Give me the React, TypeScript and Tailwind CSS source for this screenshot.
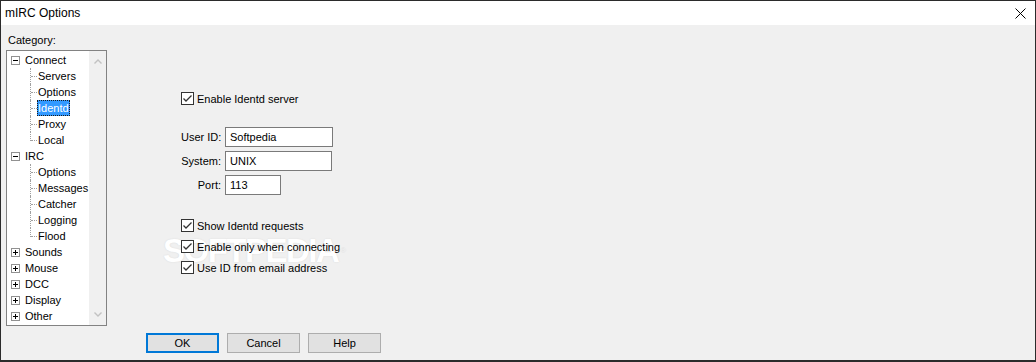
import React from "react";

const font = { fontFamily: '"Liberation Sans", Arial, sans-serif' };

type Node = { label: string; level: 0 | 1; expand?: "minus" | "plus"; selected?: boolean; last?: boolean };

const nodes: Node[] = [
  { label: "Connect", level: 0, expand: "minus" },
  { label: "Servers", level: 1 },
  { label: "Options", level: 1 },
  { label: "Identd", level: 1, selected: true },
  { label: "Proxy", level: 1 },
  { label: "Local", level: 1, last: true },
  { label: "IRC", level: 0, expand: "minus" },
  { label: "Options", level: 1 },
  { label: "Messages", level: 1 },
  { label: "Catcher", level: 1 },
  { label: "Logging", level: 1 },
  { label: "Flood", level: 1, last: true },
  { label: "Sounds", level: 0, expand: "plus" },
  { label: "Mouse", level: 0, expand: "plus" },
  { label: "DCC", level: 0, expand: "plus" },
  { label: "Display", level: 0, expand: "plus" },
  { label: "Other", level: 0, expand: "plus" },
];

function Expander({ kind }: { kind: "minus" | "plus" }) {
  return (
    <svg width="9" height="9" viewBox="0 0 9 9" className="shrink-0">
      <rect x="0.5" y="0.5" width="8" height="8" fill="white" stroke="#919191" />
      <line x1="2" y1="4.5" x2="7" y2="4.5" stroke="#000" />
      {kind === "plus" && <line x1="4.5" y1="2" x2="4.5" y2="7" stroke="#000" />}
    </svg>
  );
}

function TreeRow({ n }: { n: Node }) {
  if (n.level === 0) {
    return (
      <div className="h-[16px] flex items-center pl-[4px]">
        <Expander kind={n.expand!} />
        <span className="ml-[5px] leading-[16px]">{n.label}</span>
      </div>
    );
  }
  return (
    <div className="h-[16px] flex items-center pl-[23px] relative">
      <div
        className={`absolute left-[23px] top-0 w-0 border-l border-dotted border-[#a0a0a0] ${n.last ? "h-[9px]" : "h-[16px]"}`}
      />
      <div className="w-[6px] h-0 border-t border-dotted border-[#a0a0a0] ml-[1px]" />
      <span
        className={`h-[16px] leading-[16px] px-[1px] ${
          n.selected ? "bg-[#3399ff] text-white outline outline-1 outline-dotted outline-[#1a1a1a] -outline-offset-1" : ""
        }`}
      >
        {n.label}
      </span>
    </div>
  );
}

function Check({ label }: { label: string }) {
  return (
    <div className="flex items-center h-[13px]">
      <svg width="13" height="13" viewBox="0 0 13 13" className="shrink-0">
        <rect x="0.5" y="0.5" width="12" height="12" fill="white" stroke="#333" />
        <path d="M2.5 6.5 L5 9 L10.5 3.5" fill="none" stroke="#333" strokeWidth="1.3" />
      </svg>
      <span className="ml-[3px] leading-[16px] whitespace-nowrap">{label}</span>
    </div>
  );
}

function Field({ label, value, w }: { label: string; value: string; w: string }) {
  return (
    <div className="flex items-center h-[20px]">
      <span className="w-[40px] text-right leading-[16px] whitespace-nowrap">{label}</span>
      <div className={`ml-[4px] h-[20px] ${w} border border-[#7a7a7a] bg-white flex items-center pl-[4px]`}>
        {value}
      </div>
    </div>
  );
}

function Btn({ label, def }: { label: string; def?: boolean }) {
  return (
    <div
      className={`w-[73px] h-[20px] flex items-center justify-center bg-[#e1e1e1] ${
        def ? "border-2 border-[#0078d7]" : "border border-[#adadad]"
      }`}
    >
      {label}
    </div>
  );
}

export default function App() {
  return (
    <div
      className="w-[1036px] h-[362px] border border-b-2 border-[#2b2b2b] bg-[#f0f0f0] flex flex-col text-[11px] text-black relative isolate overflow-hidden"
      style={font}
    >
      <div className="absolute left-[162px] top-[230px] -z-10 text-[33px] leading-[40px] font-bold tracking-[-1.5px] text-white [text-shadow:0_0_1.5px_#d4d4d4] pointer-events-none select-none">
        SOFTPEDIA<span className="text-[8px] align-top ml-[2px] font-normal text-[#e4e4e4] [text-shadow:none]">®</span>
      </div>
      <div className="h-[24px] bg-white flex items-center justify-between pl-[4px] pr-[9px] shrink-0">
        <span className="text-[12px]">mIRC Options</span>
        <svg width="11" height="11" viewBox="0 0 11 11">
          <path d="M0.5 0.5 L10.5 10.5 M10.5 0.5 L0.5 10.5" stroke="#000" strokeWidth="1" />
        </svg>
      </div>
      <div className="flex-1 flex flex-col">
        <div className="flex">
          <div className="pl-[5px] pt-[8px] flex flex-col">
            <span className="leading-[14px] ml-[2px]">Category:</span>
            <div className="mt-[3px] w-[101px] h-[276px] border border-[#828282] bg-white flex">
              <div className="flex-1 pt-[1px]">
                {nodes.map((n, i) => (
                  <TreeRow key={i} n={n} />
                ))}
              </div>
              <div className="w-[17px] h-full bg-[#f0f0f0] flex flex-col items-center justify-between py-[8px]">
                <svg width="8" height="5" viewBox="0 0 8 5">
                  <path d="M0.5 4.5 L4 1 L7.5 4.5" fill="none" stroke="#c2c2c2" strokeWidth="1.4" />
                </svg>
                <svg width="8" height="5" viewBox="0 0 8 5">
                  <path d="M0.5 0.5 L4 4 L7.5 0.5" fill="none" stroke="#c2c2c2" strokeWidth="1.4" />
                </svg>
              </div>
            </div>
          </div>
          <div className="ml-[74px] pt-[67px] flex flex-col">
            <Check label="Enable Identd server" />
            <div className="mt-[22px] flex flex-col gap-[4px]">
              <Field label="User ID:" value="Softpedia" w="w-[108px]" />
              <Field label="System:" value="UNIX" w="w-[107px]" />
              <Field label="Port:" value="113" w="w-[56px]" />
            </div>
            <div className="mt-[24px] flex flex-col gap-[8px]">
              <Check label="Show Identd requests" />
              <Check label="Enable only when connecting" />
              <Check label="Use ID from email address" />
            </div>
          </div>
        </div>
        <div className="mt-[7px] pl-[145px] flex gap-[8px]">
          <Btn label="OK" def />
          <Btn label="Cancel" />
          <Btn label="Help" />
        </div>
      </div>
    </div>
  );
}
